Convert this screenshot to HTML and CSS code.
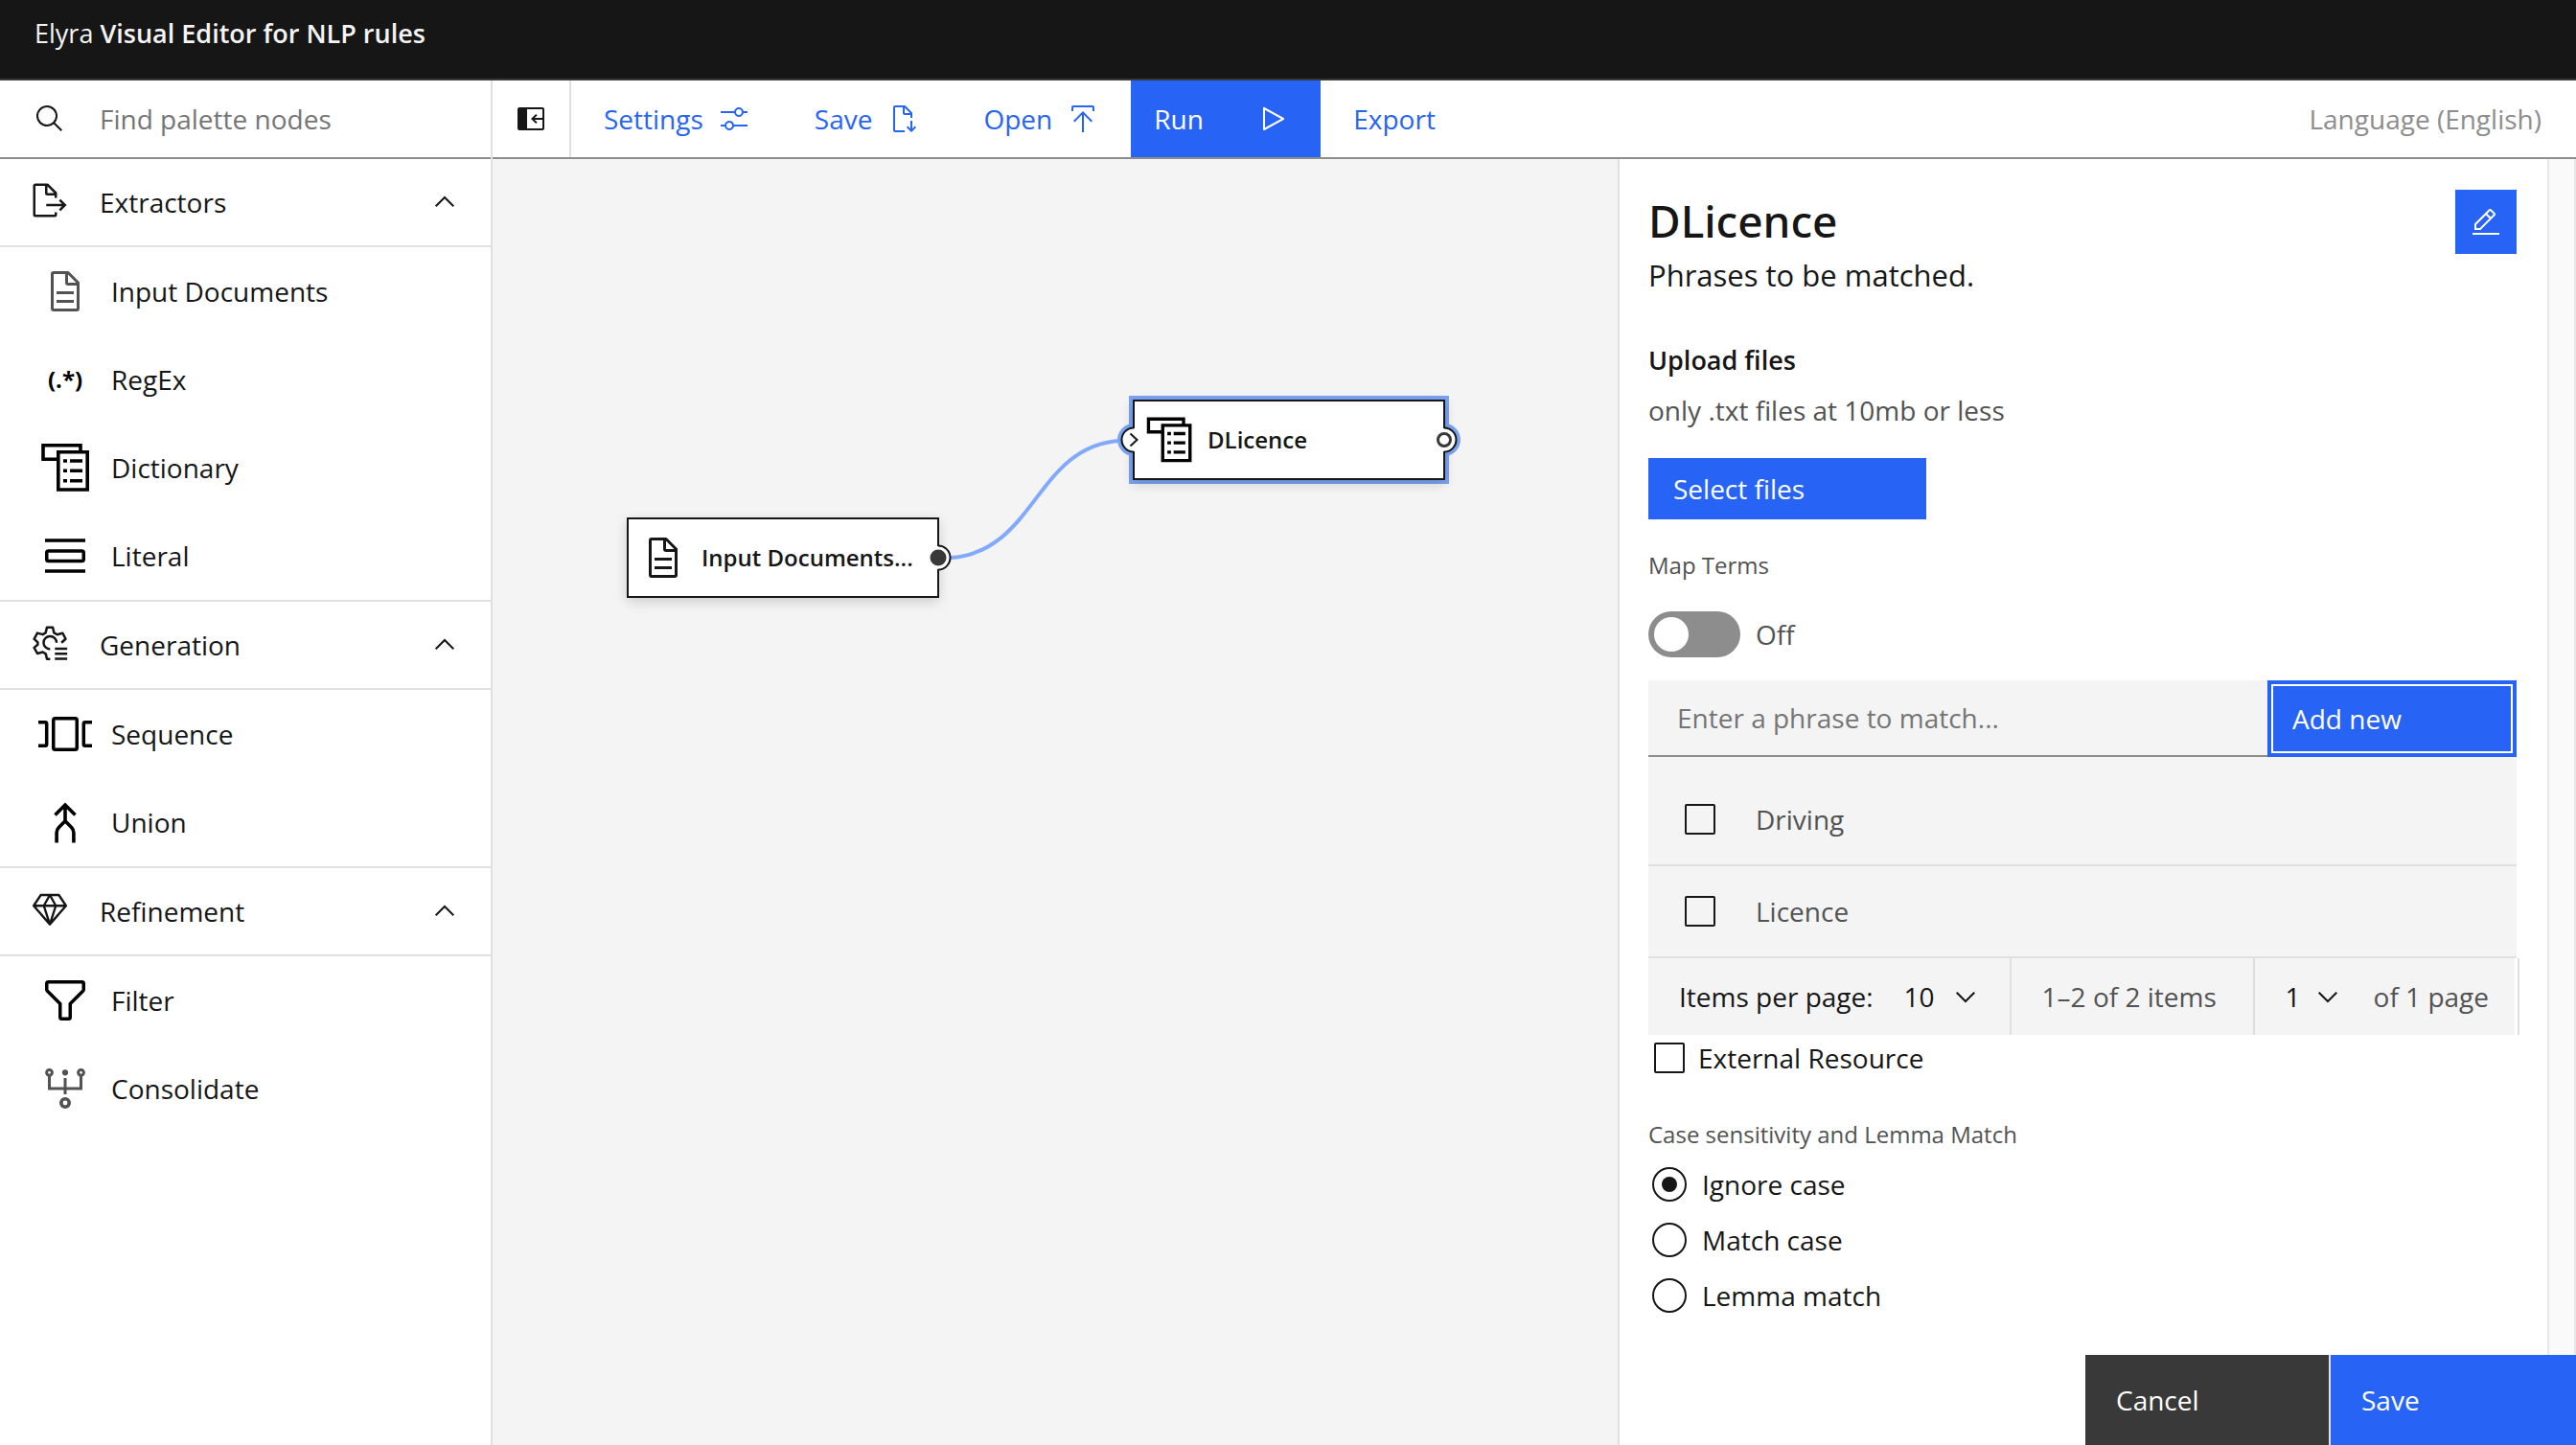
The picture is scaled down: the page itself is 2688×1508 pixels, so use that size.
FILE: index.html
```html
<!DOCTYPE html>
<html lang="en">
<head>
<meta charset="utf-8">
<meta name="viewport" content="width=device-width, initial-scale=1">
<title>Elyra Visual Editor for NLP rules</title>
<link rel="stylesheet" href="styles.css">
</head>
<body>
<svg class="sprite" aria-hidden="true">
  <symbol id="i-document" viewBox="0 0 32 32"><path d="M25.7 9.3l-7-7A.9.9 0 0 0 18 2H8a2 2 0 0 0-2 2v24a2 2 0 0 0 2 2h16a2 2 0 0 0 2-2V10a.9.9 0 0 0-.3-.7zM18 4.4l5.6 5.6H18zM24 28H8V4h8v6a2 2 0 0 0 2 2h6zM10 22h12v2H10zM10 16h12v2H10z"/></symbol>
  <symbol id="i-dictionary" viewBox="0 0 64 64"><g fill="none" stroke="currentColor" stroke-width="3.6"><path d="M24 23.2H9V8.8h39V15"/><path d="M24.8 15.8h30.4V55H24.8z"/><path d="M30 25h4M37 25h13M30 35.3h4M37 35.3h13M30 45.7h4M37 45.7h13"/></g></symbol>
  <symbol id="i-chevron-down" viewBox="0 0 32 32"><path fill="none" stroke="currentColor" stroke-width="2" d="M6.7 11.7L16 21l9.3-9.3"/></symbol>
  <symbol id="i-chevron-up" viewBox="0 0 32 32"><path fill="none" stroke="currentColor" stroke-width="2" d="M6.7 20.3L16 11l9.3 9.3"/></symbol>
</svg>

<header class="app-header">
  <a class="brand" href="#">Elyra <strong>Visual Editor for NLP rules</strong></a>
</header>

<main class="workspace">
  <aside class="palette">
    <label class="search">
      <svg class="icon-md" viewBox="0 0 32 32" aria-hidden="true"><path d="M29 27.586l-7.552-7.552a11.018 11.018 0 1 0-1.414 1.414L27.586 29zM4 13a9 9 0 1 1 9 9 9.01 9.01 0 0 1-9-9z"/></svg>
      <input type="text" placeholder="Find palette nodes" aria-label="Find palette nodes">
    </label>

    <section class="category">
      <button class="category-head" type="button" aria-expanded="true">
        <svg class="icon-cat" viewBox="0 0 32 32" aria-hidden="true"><path d="M13 21h13.17l-2.58 2.59L25 25l5-5-5-5-1.41 1.41L26.17 19H13zM22 14v-4a1 1 0 0 0-.29-.71l-7-7A1 1 0 0 0 14 2H4a2 2 0 0 0-2 2v24a2 2 0 0 0 2 2h16a2 2 0 0 0 2-2v-2h-2v2H4V4h8v6a2 2 0 0 0 2 2h6v2zm-8-4V4.41L19.59 10z"/></svg>
        <span>Extractors</span>
        <svg class="icon-md" aria-hidden="true"><use href="#i-chevron-up"/></svg>
      </button>
      <ul class="items">
        <li><span class="cell"><svg class="icon-lg muted" aria-hidden="true"><use href="#i-document"/></svg></span>Input Documents</li>
        <li><span class="cell regex">(.*)</span>RegEx</li>
        <li><span class="cell"><svg class="icon-xl" aria-hidden="true"><use href="#i-dictionary"/></svg></span>Dictionary</li>
        <li><span class="cell"><svg class="icon-xl" viewBox="0 0 64 64" aria-hidden="true"><g fill="none" stroke="currentColor" stroke-width="3.5"><path d="M11 16h42M11 48h42"/><rect x="12.75" y="27" width="38.5" height="10.5" rx="1.8"/></g></svg></span>Literal</li>
      </ul>
    </section>

    <section class="category">
      <button class="category-head" type="button" aria-expanded="true">
        <svg class="icon-cat" viewBox="0 0 32 32" aria-hidden="true"><g fill="none" stroke="currentColor" stroke-width="2" stroke-linejoin="round"><path d="M25.7 15.8l3.5-3.2-2.5-4.8-4.600 1.200-2.600-1.500-1.100-4.600h-4.800l-1.100 4.600-2.400 1.400-4.500-1.200-2.700 5 3 2.700v2l-3 2.500 2.700 4.900 4.500-1.200 2.500 1.500 1 4.300h2.700"/><path d="M21.6 15.7a5.4 5.4 0 1 0-5.4 5.4M20.2 20.7H30.5M20.2 25H30.5M20.2 29.2H30.5"/></g></svg>
        <span>Generation</span>
        <svg class="icon-md" aria-hidden="true"><use href="#i-chevron-up"/></svg>
      </button>
      <ul class="items">
        <li><span class="cell"><svg class="icon-xl" viewBox="0 0 64 64" aria-hidden="true"><g fill="none" stroke="currentColor" stroke-width="3.5"><rect x="19.75" y="15.8" width="24.5" height="32.5" rx="1.8"/><path d="M4 19.8h7.2q1.5 0 1.5 1.5v21.5q0 1.5-1.5 1.5H4M60 19.8h-7.2q-1.5 0-1.5 1.5v21.5q0 1.5 1.5 1.5H60"/></g></svg></span>Sequence</li>
        <li><span class="cell"><svg class="icon-xl" viewBox="0 0 64 64" aria-hidden="true"><g fill="none" stroke="currentColor" stroke-width="3.6"><path d="M21.5 24.5L32 14l10.5 10.5M32 13.5V31.5M23.1 53.5V43q0-3.3 2.3-5.6L32 30.8l6.6 6.6q2.3 2.3 2.3 5.6v10.5"/></g></svg></span>Union</li>
      </ul>
    </section>

    <section class="category">
      <button class="category-head" type="button" aria-expanded="true">
        <svg class="icon-cat" viewBox="0 0 32 32" aria-hidden="true"><g fill="none" stroke="currentColor" stroke-width="1.9" stroke-linejoin="round"><path d="M8.5 4h15L29.5 13 16 28.5 2.5 13zM2.5 13h27M16 4l-5 9L16 28.5 21 13z"/></g></svg>
        <span>Refinement</span>
        <svg class="icon-md" aria-hidden="true"><use href="#i-chevron-up"/></svg>
      </button>
      <ul class="items">
        <li><span class="cell"><svg class="icon-xl" viewBox="-2.286 -2.286 36.571 36.571" aria-hidden="true"><path d="M18 28h-4a2 2 0 0 1-2-2v-7.59L4.59 11A2 2 0 0 1 4 9.59V6a2 2 0 0 1 2-2h20a2 2 0 0 1 2 2v3.59a2 2 0 0 1-.59 1.41L20 18.41V26a2 2 0 0 1-2 2zM6 6v3.59l8 8V26h4v-8.41l8-8V6z"/></svg></span>Filter</li>
        <li><span class="cell"><svg class="icon-xl muted" viewBox="0 0 64 64" aria-hidden="true"><g fill="none" stroke="currentColor" stroke-width="3"><circle cx="15.5" cy="15.3" r="2.9"/><circle cx="48.5" cy="15.3" r="2.9"/><path d="M15.5 18.5V32h33V18.5M32 21v17"/><circle cx="32" cy="47" r="4.2" stroke-width="3.6"/></g><circle cx="32" cy="15.3" r="3.1"/></svg></span>Consolidate</li>
      </ul>
    </section>
  </aside>

  <div class="editor">
    <nav class="toolbar" aria-label="Canvas actions">
      <button class="tool tool-toggle" type="button" aria-label="Close palette"><svg class="icon-md" viewBox="0 0 32 32" aria-hidden="true"><path d="M28 4H4a2 2 0 0 0-2 2v20a2 2 0 0 0 2 2h24a2 2 0 0 0 2-2V6a2 2 0 0 0-2-2zm0 11H19.8l2.8-2.6L21.2 11 16 16l5.2 5 1.4-1.4L19.8 17H28v9H12V6h16z"/></svg></button>
      <button class="tool" type="button">Settings<svg class="icon-md" viewBox="0 0 32 32" aria-hidden="true"><path d="M30 8h-4.1c-.5-2.3-2.5-4-4.9-4s-4.4 1.7-4.9 4H2v2h14.1c.5 2.3 2.5 4 4.9 4s4.4-1.7 4.9-4H30zM21 12c-1.7 0-3-1.3-3-3s1.3-3 3-3 3 1.3 3 3-1.3 3-3 3zM2 24h4.1c.5 2.3 2.5 4 4.9 4s4.4-1.7 4.9-4H30v-2H15.9c-.5-2.3-2.5-4-4.9-4s-4.4 1.7-4.9 4H2zM11 20c1.7 0 3 1.3 3 3s-1.3 3-3 3-3-1.3-3-3 1.3-3 3-3z"/></svg></button>
      <button class="tool" type="button">Save<svg class="icon-md" viewBox="0 0 32 32" aria-hidden="true"><path d="M30 25l-1.414-1.414L26 26.172V18h-2v8.172l-2.586-2.586L20 25l5 5zM18 28H8V4h8v6a2 2 0 0 0 2 2h6v3h2v-5a.91.91 0 0 0-.3-.7l-7-7A.91.91 0 0 0 18 2H8a2 2 0 0 0-2 2v24a2 2 0 0 0 2 2h10zM18 4.4l5.6 5.6H18z"/></svg></button>
      <button class="tool" type="button">Open<svg class="icon-md" viewBox="0 0 32 32" aria-hidden="true"><path d="M6 18l1.41 1.41L15 11.83V30h2V11.83l7.59 7.58L26 18 16 8zM6 8V4h20v4h2V4a2 2 0 0 0-2-2H6a2 2 0 0 0-2 2v4z"/></svg></button>
      <button class="tool tool-run" type="button">Run<svg class="icon-md" viewBox="0 0 32 32" aria-hidden="true"><path d="M7 28a1 1 0 0 1-1-1V5a1 1 0 0 1 1.482-.876l20 11a1 1 0 0 1 0 1.752l-20 11A1 1 0 0 1 7 28zM8 6.69v18.62L24.925 16z"/></svg></button>
      <button class="tool" type="button">Export</button>
      <span class="language">Language (English)</span>
    </nav>

    <div class="stage">
      <div class="canvas">
        <svg class="layer" aria-hidden="true">
          <path class="link" d="M478 416C567 410 567 298 656 294"/>
          <g class="halo"><rect x="664" y="247" width="334" height="92"/><circle cx="669" cy="293" r="17"/><circle cx="993" cy="293" r="17"/></g>
        </svg>
        <div class="node node-input"><span class="cell"><svg class="icon-lg" aria-hidden="true"><use href="#i-document"/></svg></span>Input Documents...</div>
        <div class="node node-dict"><span class="cell"><svg class="icon-node" aria-hidden="true"><use href="#i-dictionary"/></svg></span>DLicence</div>
        <svg class="layer" aria-hidden="true">
          <g class="port-bg"><circle cx="465" cy="416" r="12"/><circle cx="669" cy="293" r="12"/><circle cx="993" cy="293" r="12"/></g>
          <g class="port-edge"><path d="M465 403.5a12.5 12.5 0 0 1 0 25M669 280.5a12.5 12.5 0 0 0 0 25M993 280.5a12.5 12.5 0 0 1 0 25"/></g>
          <circle class="port-dot" cx="465" cy="416" r="8.5"/>
          <path class="port-mark" d="M665.5 286.5l7 6.5-7 6.5"/>
          <circle class="port-ring" cx="993" cy="293" r="6.5"/>
        </svg>
      </div>

      <form class="panel">
        <div class="panel-body">
          <div class="panel-content">
            <div class="panel-head">
              <div>
                <h1>DLicence</h1>
                <p class="subtitle">Phrases to be matched.</p>
              </div>
              <button class="edit" type="button" aria-label="Edit name"><svg class="icon-md" viewBox="0 0 32 32" aria-hidden="true"><path d="M2 27h28v2H2zM25.4 9c.8-.8.8-2 0-2.8l-3.6-3.6c-.8-.8-2-.8-2.8 0L4 17.6V24h6.4zM20.4 4L24 7.6l-3 3L17.4 7zM6 22v-3.6l10-10 3.6 3.6-10 10z"/></svg></button>
            </div>

            <h2>Upload files</h2>
            <p class="hint">only .txt files at 10mb or less</p>
            <button class="select-files" type="button">Select files</button>

            <label class="caption" for="map-terms">Map Terms</label>
            <div class="toggle-row"><input class="toggle" id="map-terms" type="checkbox" role="switch"><span>Off</span></div>

            <div class="phrase-row">
              <input type="text" placeholder="Enter a phrase to match..." aria-label="Phrase">
              <button class="add" type="button">Add new</button>
            </div>
            <ul class="phrases">
              <li><label><input class="check" type="checkbox">Driving</label></li>
              <li><label><input class="check" type="checkbox">Licence</label></li>
            </ul>
            <div class="pagination">
              <div class="segment">
                <label for="page-size">Items per page:</label>
                <span class="picker picker-size"><select id="page-size"><option>10</option></select><svg class="icon-md" aria-hidden="true"><use href="#i-chevron-down"/></svg></span>
              </div>
              <div class="segment segment-range">1–2 of 2 items</div>
              <div class="segment segment-page">
                <span class="picker picker-page"><select id="page-number" aria-label="Page"><option>1</option></select><svg class="icon-md" aria-hidden="true"><use href="#i-chevron-down"/></svg></span>
                <label for="page-number">of 1 page</label>
              </div>
            </div>

            <label class="external"><input class="check" type="checkbox">External Resource</label>

            <fieldset class="cases">
              <legend class="caption">Case sensitivity and Lemma Match</legend>
              <label><input class="radio" type="radio" name="case" checked>Ignore case</label>
              <label><input class="radio" type="radio" name="case">Match case</label>
              <label><input class="radio" type="radio" name="case">Lemma match</label>
            </fieldset>
          </div>
          <div class="track"></div>
        </div>
        <div class="panel-foot">
          <button class="cancel" type="button">Cancel</button>
          <button class="save" type="button">Save</button>
        </div>
      </form>
    </div>
  </div>
</main>
</body>
</html>
```
FILE: styles.css
```css
:root {
  --blue: #2764f6;
  --ink: #161616;
  --muted: #525252;
  --placeholder: #757575;
  --line: #e0e0e0;
  --strong-line: #8d8d8d;
  --layer: #f4f4f4;
}

* { box-sizing: border-box; }

body {
  margin: 0;
  min-height: 100vh;
  display: flex;
  flex-direction: column;
  background: #fff;
  color: var(--ink);
  font: 28px/40px "Open Sans", "Noto Sans", sans-serif;
}

h1, h2, p, ul, fieldset { margin: 0; padding: 0; }
ul { list-style: none; }
fieldset { border: 0; }
legend { padding: 0; }
svg { display: block; fill: currentColor; flex: none; }

button, input, select {
  margin: 0;
  padding: 0;
  border: 0;
  border-radius: 0;
  background: none;
  color: inherit;
  font: inherit;
  text-align: left;
  appearance: none;
}
input::placeholder { color: var(--placeholder); opacity: 1; }

.sprite { position: absolute; width: 0; height: 0; }
.icon-md { width: 32px; height: 32px; }
.icon-cat { width: 40px; height: 40px; }
.icon-lg { width: 48px; height: 48px; }
.icon-node { width: 60px; height: 60px; }
.icon-xl { width: 64px; height: 64px; }
.muted { color: var(--muted); }

/* Header */
.app-header {
  height: 84px;
  padding-left: 36px;
  border-bottom: 2px solid #393939;
  background: var(--ink);
}
.brand {
  color: var(--layer);
  font-size: 27px;
  line-height: 70px;
  text-decoration: none;
}
.brand strong { font-weight: 600; }

.workspace { flex: 1; display: flex; }

/* Palette */
.palette { flex: 0 0 514px; border-right: 2px solid var(--line); }
.search {
  display: flex;
  align-items: center;
  gap: 36px;
  height: 82px;
  padding: 0 36px;
  border-bottom: 2px solid var(--strong-line);
}
.search input { flex: 1; min-width: 0; }
.category { border-bottom: 2px solid var(--line); }
.category:last-child { border-bottom: 0; }
.category-head {
  display: flex;
  align-items: center;
  gap: 32px;
  width: 100%;
  height: 92px;
  padding: 0 32px;
  border-bottom: 2px solid var(--line);
}
.category-head span { flex: 1; }
.icon-cat { margin-bottom: 4px; }
.items li { display: flex; align-items: center; gap: 16px; height: 92px; padding-left: 36px; }
.cell { flex: 0 0 64px; display: flex; justify-content: center; color: #000; }
.regex { font-size: 24px; font-weight: 700; }

/* Toolbar */
.editor { flex: 1; min-width: 0; display: flex; flex-direction: column; }
.toolbar { display: flex; height: 82px; border-bottom: 2px solid var(--strong-line); }
.tool { display: flex; align-items: center; gap: 16px; padding: 0 34px; color: var(--blue); }
.tool-toggle { padding: 0 24px; border-right: 2px solid var(--line); color: var(--ink); }
.tool-run { justify-content: space-between; width: 198px; padding-left: 24px; background: var(--blue); color: #fff; }
.language { margin: auto 36px auto auto; color: var(--strong-line); }

/* Canvas */
.stage { flex: 1; display: flex; }
.canvas { position: relative; flex: 1; overflow: hidden; background: var(--layer); }
.layer { position: absolute; inset: 0; width: 100%; height: 100%; fill: none; }
.link { stroke: #82aafc; stroke-width: 4; }
.halo { fill: #7ba3f2; }
.node {
  position: absolute;
  display: flex;
  align-items: center;
  gap: 8px;
  width: 326px;
  height: 84px;
  padding-left: 4px;
  border: 2px solid var(--ink);
  background: #fff;
  box-shadow: 0 4px 12px rgba(0, 0, 0, .16);
  font-size: 24px;
  font-weight: 600;
  white-space: nowrap;
}
.node .icon-lg { color: var(--ink); }
.node-input { left: 140px; top: 374px; }
.node-dict { left: 668px; top: 251px; }
.port-bg { fill: #fff; }
.port-edge { stroke: var(--ink); stroke-width: 2; }
.port-dot { fill: #393939; }
.port-mark { stroke: var(--ink); stroke-width: 2; }
.port-ring { stroke: #393939; stroke-width: 3; }

/* Properties panel */
.panel {
  flex: 0 0 1000px;
  display: flex;
  flex-direction: column;
  border-left: 2px solid var(--line);
}
.panel-body { flex: 1; display: flex; }
.panel-content { flex: 1; min-width: 0; padding: 32px 32px 44px 30px; }
.track {
  flex: 0 0 30px;
  border: solid #e8e8e8;
  border-width: 0 2px;
  background: #fafafa;
}
.panel-head { display: flex; justify-content: space-between; align-items: flex-start; }
h1 { font-family: "Noto Sans", sans-serif; font-size: 46px; line-height: 64px; font-weight: 500; }
.subtitle { font-size: 31px; line-height: 50px; }
.edit { display: grid; place-items: center; width: 64px; height: 67px; background: var(--blue); color: #fff; }
h2 { margin-top: 44px; font-size: 27px; line-height: 40px; font-weight: 600; }
.hint { margin-top: 12px; color: var(--muted); }
.select-files {
  display: block;
  width: 290px;
  height: 64px;
  margin-top: 30px;
  padding-left: 26px;
  background: var(--blue);
  color: #fff;
}
.caption { display: block; color: var(--muted); font-size: 24px; line-height: 32px; }
.select-files + .caption { margin-top: 32px; }

.toggle-row { display: flex; align-items: center; gap: 16px; height: 48px; margin-top: 32px; color: var(--muted); }
.toggle { width: 96px; height: 48px; padding: 6px; border-radius: 24px; background: var(--strong-line); }
.toggle::before { content: ""; display: block; width: 36px; height: 36px; border-radius: 50%; background: #fff; }

.phrase-row { display: flex; height: 80px; margin-top: 24px; background: var(--layer); }
.phrase-row input { flex: 1; min-width: 0; padding: 0 30px; border-bottom: 2px solid var(--strong-line); }
.add {
  width: 260px;
  padding-left: 22px;
  border: 4px solid var(--blue);
  background: var(--blue);
  box-shadow: inset 0 0 0 2px #fff;
  color: #fff;
}
.phrases { padding-top: 18px; background: var(--layer); color: var(--muted); }
.phrases li { border-bottom: 2px solid var(--line); }
.phrases label { display: flex; align-items: center; gap: 42px; height: 94px; padding-left: 38px; }
.check { flex: none; width: 32px; height: 32px; border: 2px solid var(--ink); border-radius: 2px; }

.pagination {
  display: flex;
  height: 80px;
  margin-right: -3px;
  border-right: 2px solid var(--line);
  background: linear-gradient(var(--layer), var(--layer)) no-repeat 0 0 / calc(100% - 3px) 100%;
}
.segment { display: flex; align-items: center; gap: 32px; padding: 0 30px 0 32px; border-right: 2px solid var(--line); white-space: nowrap; }
.segment-range { flex: 1; color: var(--muted); }
.segment-page { border-right: 0; }
.segment-page label { color: var(--muted); }
.picker { display: grid; align-items: center; }
.picker > * { grid-area: 1 / 1; }
.picker svg { justify-self: end; pointer-events: none; }
.picker-size { width: 80px; }
.picker-page { width: 60px; }

.external { display: flex; align-items: center; gap: 14px; height: 48px; padding-left: 6px; }
.cases { display: flex; flex-direction: column; gap: 22px; margin-top: 40px; }
.cases legend { margin-bottom: 18px; }
.cases label { display: flex; align-items: center; gap: 16px; height: 36px; padding-left: 4px; }
.radio { display: grid; place-items: center; flex: none; width: 36px; height: 36px; border: 2px solid var(--ink); border-radius: 50%; }
.radio:checked::before { content: ""; width: 16px; height: 16px; border-radius: 50%; background: var(--ink); }

.panel-foot { display: flex; justify-content: flex-end; height: 94px; }
.panel-foot button { width: 256px; padding-left: 32px; color: #fff; }
.panel-foot .cancel { border-right: 2px solid var(--line); background: #393939; }
.panel-foot .save { background: var(--blue); }
```
